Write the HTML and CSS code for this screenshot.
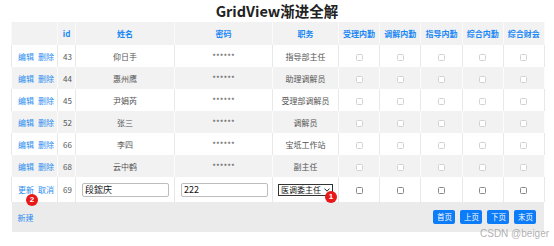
FILE: index.html
```html
<!DOCTYPE html>
<html>
<head>
<meta charset="utf-8">
<link rel="stylesheet" href="styles.css">
</head>
<body>
<div class="page">
  <h1 class="title">GridView渐进全解</h1>
  <table class="grid">
    <colgroup>
      <col class="c-act"><col class="c-id"><col class="c-name"><col class="c-pwd"><col class="c-job">
      <col class="c-chk"><col class="c-chk"><col class="c-chk"><col class="c-chk"><col class="c-chk">
    </colgroup>
    <thead>
      <tr class="head">
        <th></th><th>id</th><th>姓名</th><th>密码</th><th>职务</th>
        <th>受理内勤</th><th>调解内勤</th><th>指导内勤</th><th>综合内勤</th><th>综合财会</th>
      </tr>
    </thead>
    <tbody>
      <tr class="row">
        <td class="act"><a>编辑</a><a>删除</a></td><td>43</td><td class="mid">仰日手</td><td class="mid">******</td><td class="mid">指导部主任</td>
        <td class="mid"><span class="cb"></span></td><td class="mid"><span class="cb"></span></td><td class="mid"><span class="cb"></span></td><td class="mid"><span class="cb"></span></td><td class="mid"><span class="cb"></span></td>
      </tr>
      <tr class="row alt">
        <td class="act"><a>编辑</a><a>删除</a></td><td>44</td><td class="mid">惠州鹰</td><td class="mid">******</td><td class="mid">助理调解员</td>
        <td class="mid"><span class="cb"></span></td><td class="mid"><span class="cb"></span></td><td class="mid"><span class="cb"></span></td><td class="mid"><span class="cb"></span></td><td class="mid"><span class="cb"></span></td>
      </tr>
      <tr class="row">
        <td class="act"><a>编辑</a><a>删除</a></td><td>45</td><td class="mid">尹娟芮</td><td class="mid">******</td><td class="mid">受理部调解员</td>
        <td class="mid"><span class="cb"></span></td><td class="mid"><span class="cb"></span></td><td class="mid"><span class="cb"></span></td><td class="mid"><span class="cb"></span></td><td class="mid"><span class="cb"></span></td>
      </tr>
      <tr class="row alt">
        <td class="act"><a>编辑</a><a>删除</a></td><td>52</td><td class="mid">张三</td><td class="mid">******</td><td class="mid">调解员</td>
        <td class="mid"><span class="cb"></span></td><td class="mid"><span class="cb"></span></td><td class="mid"><span class="cb"></span></td><td class="mid"><span class="cb"></span></td><td class="mid"><span class="cb"></span></td>
      </tr>
      <tr class="row">
        <td class="act"><a>编辑</a><a>删除</a></td><td>66</td><td class="mid">李四</td><td class="mid">******</td><td class="mid">宝坻工作站</td>
        <td class="mid"><span class="cb"></span></td><td class="mid"><span class="cb"></span></td><td class="mid"><span class="cb"></span></td><td class="mid"><span class="cb"></span></td><td class="mid"><span class="cb"></span></td>
      </tr>
      <tr class="row alt">
        <td class="act"><a>编辑</a><a>删除</a></td><td>68</td><td class="mid">云中鹤</td><td class="mid">******</td><td class="mid">副主任</td>
        <td class="mid"><span class="cb"></span></td><td class="mid"><span class="cb"></span></td><td class="mid"><span class="cb"></span></td><td class="mid"><span class="cb"></span></td><td class="mid"><span class="cb"></span></td>
      </tr>
      <tr class="row edit">
        <td class="act"><span class="wrap"><a>更新</a><span class="badge b2">2</span></span><a>取消</a></td><td>69</td>
        <td class="mid"><input class="field" value="段鋐庆"></td>
        <td class="mid"><input class="field" value="222"></td>
        <td class="mid"><span class="wrap"><span class="sel">医调委主任<svg class="chev" width="6" height="4" viewBox="0 0 6 4"><path d="M0.5 0.6 L3 3.2 L5.5 0.6" fill="none" stroke="#222" stroke-width="1"/></svg></span><span class="badge b1">1</span></span></td>
        <td class="mid"><span class="cb on"></span></td><td class="mid"><span class="cb on"></span></td><td class="mid"><span class="cb on"></span></td><td class="mid"><span class="cb on"></span></td><td class="mid"><span class="cb on"></span></td>
      </tr>
      <tr class="foot">
        <td colspan="10">
          <div class="footbar">
            <a class="new">新建</a>
            <div class="pager">
              <span class="btn">首页</span><span class="btn">上页</span><span class="btn">下页</span><span class="btn">末页</span>
            </div>
          </div>
        </td>
      </tr>
    </tbody>
  </table>
  <div class="mark">CSDN @beiger</div>
</div>
</body>
</html>
```
FILE: styles.css
```css
* { box-sizing: border-box; }
html, body { margin: 0; padding: 0; background: #fff; }
body { font-family: "Noto Sans CJK SC", "Noto Sans", sans-serif; color: #555; }
.page { position: relative; width: 554px; height: 246px; overflow: hidden; }
.title {
  margin: 0; height: 22px; line-height: 22px; text-align: center;
  font-size: 14.5px; font-weight: 700; color: #222;
}
.grid {
  margin-left: 11px; width: 533px; border-collapse: collapse; table-layout: fixed;
  font-size: 8px;
}
.c-act { width: 46px; } .c-id { width: 18px; } .c-name { width: 99px; }
.c-pwd { width: 98px; } .c-job { width: 66px; } .c-chk { width: 41.2px; }
.grid th, .grid td { padding: 0; border-left: 1px solid #e8e8e8; border-right: 1px solid #e8e8e8; vertical-align: middle; white-space: nowrap; }
.head { height: 23px; background: #f2f2f2; }
.head th { color: #1a88f5; font-weight: 700; text-align: center; border-color: #fafafa; }
.row { height: 22px; background: #fff; }
.row.alt { background: #f2f2f2; }
.row.alt td { border-color: #fcfcfc; }
.row td { padding-left: 5px; }
.row td.mid { text-align: center; padding-left: 0; }
.row td.act { padding-left: 6px; }
.act a { color: #2b8cf0; margin-right: 4px; }
.row.edit { height: 25px; }
.wrap { position: relative; display: inline-block; }
.field {
  display: block; width: 87px; height: 14px; margin-left: 6px; padding: 0 2px;
  border: 1px solid #bdbdbd; border-radius: 2px; font: 9px "Noto Sans CJK SC", sans-serif; color: #111; background: #fff;
}
.sel {
  display: inline-flex; align-items: center; justify-content: space-between;
  width: 55px; height: 12px; border: 1px solid #333; padding: 0 2px;
  font-size: 8px; color: #111; background: #fff; line-height: 10px; white-space: nowrap;
}
.chev { flex: none; margin-left: 2px; }
.badge {
  position: absolute; width: 12px; height: 12px; border-radius: 50%; background: #e81818;
  color: #fff; font: 700 8px/12px "Liberation Sans", sans-serif; text-align: center;
}
.b2 { left: 8px; top: 10px; }
.b1 { left: 47px; top: 7px; }
.cb { display: inline-block; width: 7px; height: 7px; border: 1px solid #d2d2d2; border-radius: 1.5px; vertical-align: middle; background: #fff; }
.cb.on { border-color: #8a8a8a; }
.foot { height: 30px; background: #ebebeb; }
.foot td { border: none; }
.footbar { display: flex; align-items: center; justify-content: space-between; padding: 0 8px 0 6px; }
.new { color: #2b8cf0; }
.pager { display: flex; gap: 5px; }
.btn {
  display: inline-block; width: 22px; height: 14px; line-height: 14px; text-align: center;
  background: #0c7cf9; color: #fff; border-radius: 2px; font-size: 7.5px;
}
.mark {
  position: absolute; left: 480px; top: 228px; font: 10px "Liberation Sans", sans-serif; color: rgba(150,150,150,0.75);
}
```
